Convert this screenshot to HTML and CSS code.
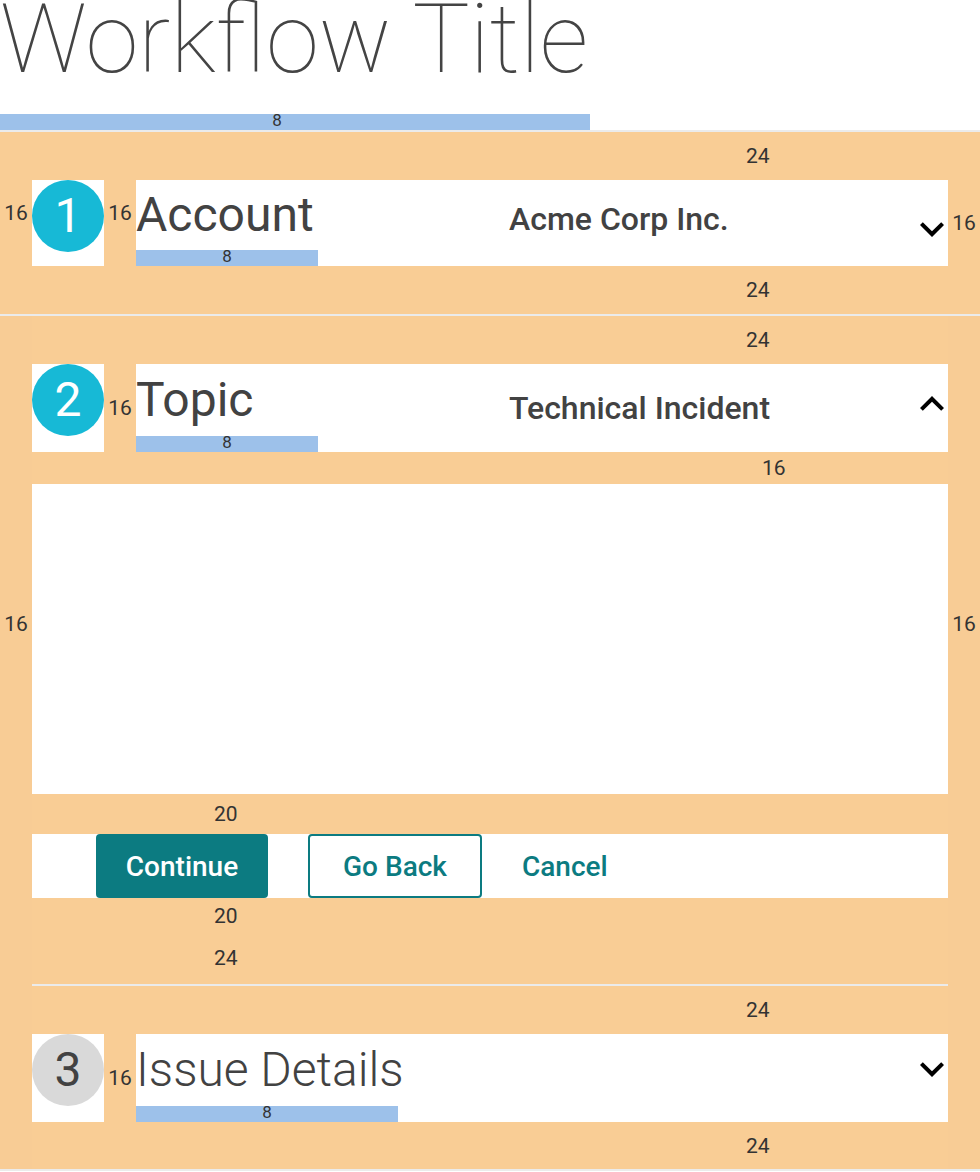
FILE: index.html
```html
<!DOCTYPE html>
<html lang="en">
<head>
<meta charset="utf-8">
<title>Workflow</title>
<link rel="stylesheet" href="styles.css">
</head>
<body>
<header class="page-head">
  <h1 class="page-title">Workflow Title</h1>
  <div class="gap-bar gap-bar--title"><span>8</span></div>
</header>
<div class="rule"></div>

<section class="step step--one">
  <div class="band band--48 band--wide"><span class="label">24</span></div>
  <div class="step-row step-row--short">
    <div class="side side--top"><span class="label">16</span></div>
    <div class="badge-cell"><div class="badge badge--active">1</div></div>
    <div class="gutter side--top"><span class="label">16</span></div>
    <div class="head-main">
      <div class="title-col">
        <div class="title-stack">
          <div class="head-title head-title--short">Account</div>
          <div class="gap-bar"><span>8</span></div>
        </div>
      </div>
      <div class="head-value head-value--raised">Acme Corp Inc.</div>
      <svg class="chev chev--one" viewBox="0 0 20 24" aria-hidden="true"><path d="M16.59 8.59L12 13.17 7.41 8.59 6 10l6 6 6-6z"/></svg>
    </div>
    <div class="side"><span class="label">16</span></div>
  </div>
  <div class="band band--48 band--wide"><span class="label">24</span></div>
</section>
<div class="rule"></div>

<div class="steps-frame">
  <div class="frame-side"><span class="label">16</span></div>
  <div class="frame-body">
    <section class="step step--two">
      <div class="band band--48 band--inner"><span class="label">24</span></div>
      <div class="step-row">
        <div class="badge-cell"><div class="badge badge--active">2</div></div>
        <div class="gutter"><span class="label">16</span></div>
        <div class="head-main">
          <div class="title-col">
            <div class="title-stack">
              <div class="head-title">Topic</div>
              <div class="gap-bar"><span>8</span></div>
            </div>
          </div>
          <div class="head-value">Technical Incident</div>
          <svg class="chev chev--two" viewBox="0 0 20 24" aria-hidden="true"><path d="M12 8l-6 6 1.41 1.41L12 10.83l4.59 4.58L18 14z"/></svg>
        </div>
      </div>
      <div class="band band--32"><span class="label">16</span></div>
      <div class="step-content"></div>
      <div class="band band--40"><span class="label">20</span></div>
      <div class="actions">
        <button class="btn btn--primary" type="button">Continue</button>
        <button class="btn btn--outline" type="button">Go Back</button>
        <button class="btn btn--text" type="button">Cancel</button>
      </div>
      <div class="band band--stack">
        <span class="label">20</span>
        <span class="label">24</span>
      </div>
    </section>
    <div class="rule"></div>
    <section class="step step--three">
      <div class="band band--48 band--inner"><span class="label">24</span></div>
      <div class="step-row">
        <div class="badge-cell"><div class="badge badge--idle">3</div></div>
        <div class="gutter"><span class="label">16</span></div>
        <div class="head-main">
          <div class="title-col">
            <div class="title-stack title-stack--wide">
              <div class="head-title head-title--light">Issue Details</div>
              <div class="gap-bar"><span>8</span></div>
            </div>
          </div>
          <div class="head-value"></div>
          <svg class="chev chev--three" viewBox="0 0 20 24" aria-hidden="true"><path d="M16.59 8.59L12 13.17 7.41 8.59 6 10l6 6 6-6z"/></svg>
        </div>
      </div>
      <div class="band band--47 band--inner"><span class="label">24</span></div>
    </section>
  </div>
  <div class="frame-side frame-side--right"><span class="label">16</span></div>
</div>
<div class="rule"></div>
</body>
</html>
```

FILE: styles.css
```css
* {
  box-sizing: border-box;
}

body {
  margin: 0;
  background: #ffffff;
  font-family: Roboto, "Noto Sans", Arial, sans-serif;
  color: #424242;
}

.page-title {
  margin: 0 0 36px;
  font-size: 96px;
  font-weight: 100;
  line-height: 78px;
  letter-spacing: 0;
  color: #444444;
  white-space: nowrap;
}

.gap-bar {
  height: 16px;
  background: #9dc1ea;
  color: #333333;
  font-size: 17px;
  line-height: 12px;
  text-align: center;
}

.gap-bar--title {
  width: 590px;
  padding-right: 36px;
}

.rule {
  height: 2px;
  background: #ebebeb;
}

.label {
  display: block;
  font-size: 21px;
  line-height: 24px;
  color: #333333;
}

/* spacing bands */
.band {
  display: flex;
  align-items: center;
  background: #f9cd95;
}

.band--48 { height: 48px; }
.band--47 { height: 47px; }
.band--40 { height: 40px; padding-left: 182px; }
.band--32 { height: 32px; padding-left: 730px; }
.band--wide { padding-left: 746px; }
.band--inner { padding-left: 714px; }

.band--stack {
  height: 86px;
  flex-direction: column;
  align-items: flex-start;
  gap: 18px;
  padding: 6px 0 0 182px;
}

/* step header rows */
.step--one {
  background: #f9cd95;
}

.step-row {
  display: flex;
  height: 88px;
}

.step-row--short {
  height: 86px;
}

.side,
.gutter {
  width: 32px;
  flex: none;
  display: flex;
  align-items: center;
  justify-content: center;
  background: #f9cd95;
}

.side--top {
  align-items: flex-start;
  padding-top: 21px;
}

.badge-cell {
  width: 72px;
  flex: none;
  background: #ffffff;
}

.badge {
  width: 72px;
  height: 72px;
  border-radius: 50%;
  display: flex;
  align-items: center;
  justify-content: center;
  font-size: 48px;
  line-height: 1;
}

.badge--active {
  background: #17b9d6;
  color: #ffffff;
}

.badge--idle {
  background: #d9d9d9;
  color: #424242;
}

.head-main {
  flex: 1;
  display: flex;
  background: #ffffff;
}

.title-col {
  width: 373px;
  flex: none;
}

.title-stack {
  display: inline-flex;
  flex-direction: column;
  min-width: 182px;
}

.title-stack--wide {
  width: 262px;
}

.head-title {
  font-size: 48px;
  font-weight: 400;
  line-height: 72px;
  white-space: nowrap;
  color: #424242;
}

.head-title--short {
  line-height: 70px;
}

.head-title--light {
  font-weight: 300;
}

.head-value {
  flex: 1;
  align-self: center;
  font-size: 32px;
  font-weight: 500;
  color: #424242;
  white-space: nowrap;
}

.head-value--raised {
  margin-bottom: 8px;
}

.chev {
  width: 40px;
  height: 48px;
  flex: none;
  align-self: flex-start;
  fill: #000000;
}

.chev--one { margin-top: 25px; }
.chev--two { margin-top: 16px; }
.chev--three { margin-top: 11px; }

/* frame around steps 2 and 3 */
.steps-frame {
  display: flex;
}

.frame-side {
  width: 32px;
  flex: none;
  display: flex;
  justify-content: center;
  padding-top: 296px;
  background: #f8cc95;
}

.frame-body {
  flex: 1;
  min-width: 0;
}

.step-content {
  height: 310px;
  background: #ffffff;
}

.actions {
  height: 64px;
  display: flex;
  align-items: stretch;
  gap: 40px;
  padding-left: 64px;
  background: #ffffff;
}

.btn {
  margin: 0;
  padding: 0;
  font-family: Roboto, "Noto Sans", Arial, sans-serif;
  font-size: 28px;
  font-weight: 500;
  border-radius: 4px;
  cursor: pointer;
}

.btn--primary {
  width: 172px;
  border: none;
  background: #0c7b81;
  color: #ffffff;
}

.btn--outline {
  width: 174px;
  border: 2px solid #0c7b81;
  background: #ffffff;
  color: #0c7b81;
}

.btn--text {
  border: none;
  background: transparent;
  color: #0c7b81;
}
```
